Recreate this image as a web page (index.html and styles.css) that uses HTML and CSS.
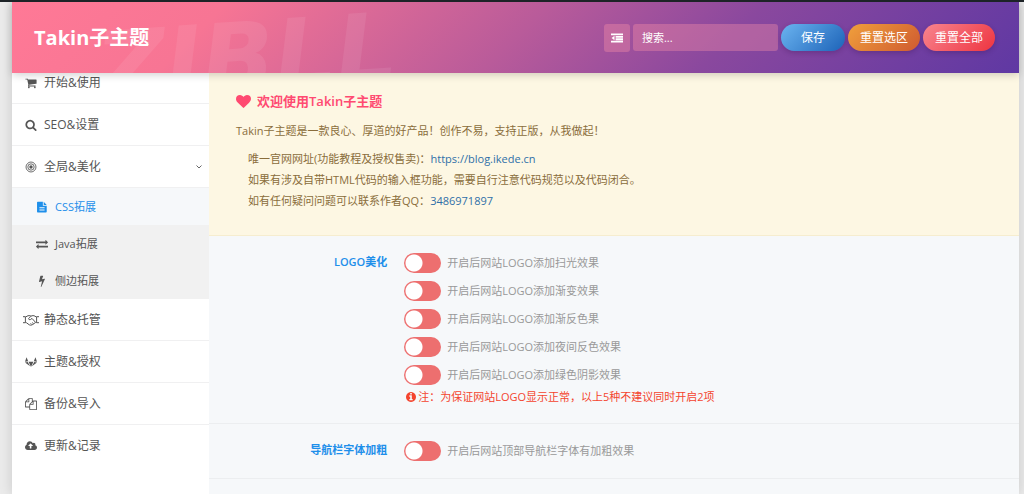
FILE: index.html
```html
<!DOCTYPE html>
<html lang="zh-CN">
<head>
<meta charset="utf-8">
<title>Takin子主题</title>
<link rel="stylesheet" href="styles.css">
</head>
<body>
<div class="panel">
  <header class="header">
    <div class="watermark" aria-hidden="true"><span class="watermark-text">ZIBLL</span></div>
    <h1 class="brand">Takin子主题</h1>
    <form class="actions">
      <button type="button" class="expand" aria-label="展开全部">
        <svg class="icon" viewBox="0 0 13 10"><path d="M0 0h13v2H0zM5 2.700h8v2H5zM5 5.400h8v2H5zM0 8.100h13v1.900H0zM3.800 2.600v4.800L.6 5z"/></svg>
      </button>
      <input class="search" type="text" placeholder="搜索..." aria-label="搜索">
      <button type="button" class="btn btn-save">保存</button>
      <button type="button" class="btn btn-section">重置选区</button>
      <button type="button" class="btn btn-all">重置全部</button>
    </form>
  </header>
  <div class="body">
    <nav class="nav">
      <ul class="menu">
        <li><a class="item" href="#start"><svg class="icon" viewBox="0 0 1792 1792"><path d="M704 1536q0 52-38 90t-90 38-90-38-38-90 38-90 90-38 90 38 38 90zm896 0q0 52-38 90t-90 38-90-38-38-90 38-90 90-38 90 38 38 90zm128-1088v512q0 24-16.500 42.500t-40.500 21.500l-1044 122q13 60 13 70 0 16-24 64h920q26 0 45 19t19 45-19 45-45 19h-1024q-26 0-45-19t-19-45q0-11 8-31.500t16-36 21.500-40 15.500-29.500l-177-823h-204q-26 0-45-19t-19-45 19-45 45-19h256q16 0 28.500 6.500t19.500 15.500 13 24.500 8 26 5.500 29.500 4.500 26h1201q26 0 45 19t19 45z"/></svg>开始&amp;使用</a></li>
        <li><a class="item" href="#seo"><svg class="icon" viewBox="0 0 1792 1792"><path d="M1216 832q0-185-131.500-316.500t-316.500-131.500-316.500 131.500-131.500 316.500 131.500 316.500 316.500 131.500 316.500-131.500 131.500-316.500zm512 832q0 52-38 90t-90 38q-54 0-90-38l-343-342q-179 124-399 124-143 0-273.500-55.500t-225-150-150-225-55.500-273.500 55.500-273.500 150-225 225-150 273.500-55.500 273.500 55.500 225 150 150 225 55.500 273.500q0 220-124 399l343 343q37 37 37 90z"/></svg>SEO&amp;设置</a></li>
        <li>
          <a class="item" href="#global"><svg class="icon line" viewBox="0 0 14 14"><circle cx="7" cy="7" r="5.800"/><circle cx="7" cy="7" r="3.700"/><circle class="solid" cx="7" cy="7" r="2"/></svg>全局&amp;美化<svg class="chevron" viewBox="0 0 8 6"><path d="M1.500 1.500 4 4l2.500-2.500"/></svg></a>
          <ul class="submenu">
            <li><a class="item sub active" href="#css"><svg class="icon" viewBox="0 0 12 14"><path fill-rule="evenodd" d="M1 1h6v4.500h4.500V12.500q0 .9-.9.900H1q-.8 0-.8-.9V1.800Q.2 1 1 1zM3 7v.8h6V7zm0 2v.8h6V9zm0 2v.8h6V11zM8 1l3.500 3.600H8z"/></svg>CSS拓展</a></li>
            <li><a class="item sub" href="#java"><svg class="icon" viewBox="0 0 1792 1792"><path d="M1792 1184v192q0 13-9.500 22.500t-22.500 9.500h-1376v192q0 13-9.500 22.500t-22.500 9.500q-12 0-24-10l-319-320q-9-9-9-22 0-14 9-23l320-320q9-9 23-9 13 0 22.500 9.500t9.500 22.500v192h1376q13 0 22.500 9.500t9.500 22.500zm0-544q0 14-9 23l-320 320q-9 9-23 9-13 0-22.500-9.500t-9.500-22.500v-192h-1376q-13 0-22.500-9.500t-9.500-22.500v-192q0-13 9.500-22.500t22.500-9.500h1376v-192q0-14 9-23t23-9q12 0 24 10l319 319q9 9 9 23z"/></svg>Java拓展</a></li>
            <li><a class="item sub" href="#side"><svg class="icon" viewBox="0 0 1792 1792"><path d="M1333 566q18 20 7 44l-540 1157q-13 25-42 25-4 0-14-2-17-5-25.500-19t-4.500-30l197-808-406 101q-4 1-12 1-18 0-31-11-18-15-13-39l201-825q4-14 16-23t28-9h328q19 0 32 12.500t13 29.500q0 8-5 18l-171 463 396-98q8-2 12-2 19 0 34 15z"/></svg>侧边拓展</a></li>
          </ul>
        </li>
        <li><a class="item" href="#static"><svg class="icon line wide" viewBox="0 0 16 12"><path d="M0 2.700h2.400v6H0M16 2.700h-2.400v6H16M2.600 3 5 1.700h2.200L8 2.200l1-.5h2L13.400 3M2.600 8.600l1 .2 2.600 2q1.600.8 3 0l3.200-2.200 1-.1M8 2.200 5.600 4.600q.2 1.600 1.800 1L9 4.400l3.400 3.800M9.200 8.500l1.300 1.300M7.600 9.300l1 1.100"/></svg>静态&amp;托管</a></li>
        <li><a class="item" href="#theme"><svg class="icon" viewBox="0 0 14 14"><path d="M1.800 1.600 3.700 6.200 0 6.800zM0 7.500 3.200 6.900 6 12zM12.200 1.600 10.300 6.200 14 6.800zM14 7.500 10.800 6.900 8 12zM4.200 6.700h5.600L7 12.800z"/></svg>主题&amp;授权</a></li>
        <li><a class="item" href="#backup"><svg class="icon" viewBox="0 0 1792 1792"><path d="M1696 384q40 0 68 28t28 68v1216q0 40-28 68t-68 28h-960q-40 0-68-28t-28-68v-288h-544q-40 0-68-28t-28-68v-672q0-40 20-88t48-76l408-408q28-28 76-48t88-20h416q40 0 68 28t28 68v328q68-40 128-40h416zm-544 213l-299 299h299v-299zm-640-384l-299 299h299v-299zm196 647l316-316v-416h-384v416q0 40-28 68t-68 28h-416v640h512v-256q0-40 20-88t48-76zm956 804v-1152h-384v416q0 40-28 68t-68 28h-416v640h896z"/></svg>备份&amp;导入</a></li>
        <li><a class="item last" href="#update"><svg class="icon" viewBox="0 0 1920 1792"><path d="M1280 864q0-14-9-23l-352-352q-9-9-23-9t-23 9l-351 351q-10 12-10 24 0 14 9 23t23 9h224v352q0 13 9.500 22.500t22.500 9.500h192q13 0 22.500-9.500t9.500-22.500v-352h224q13 0 22.500-9.500t9.500-22.500zm640 288q0 159-112.500 271.500t-271.500 112.500h-1088q-185 0-316.500-131.500t-131.500-316.500q0-130 70-240t188-165q-2-30-2-43 0-212 150-362t362-150q156 0 285.500 87t188.500 231q71-62 166-62 106 0 181 75t75 181q0 76-41 138 130 31 213.500 135.500t83.500 238.500z"/></svg>更新&amp;记录</a></li>
      </ul>
    </nav>
    <main class="content">
      <section class="notice">
        <h2 class="notice-title"><svg class="icon" viewBox="0 0 1792 1792"><path d="M896 1664q-26 0-44-18l-624-602q-10-8-27.500-26t-55.500-65.500-68-97.500-53.500-121-23.500-138q0-220 127-344t351-124q62 0 126.500 21.500t120 58 95.500 68.500 76 68q36-36 76-68t95.500-68.500 120-58 126.500-21.500q224 0 351 124t127 344q0 221-229 450l-623 600q-18 18-44 18z"/></svg>欢迎使用Takin子主题</h2>
        <p class="lead">Takin子主题是一款良心、厚道的好产品！创作不易，支持正版，从我做起！</p>
        <ul class="notes">
          <li>唯一官网网址(功能教程及授权售卖)：<a href="#blog">https://blog.ikede.cn</a></li>
          <li>如果有涉及自带HTML代码的输入框功能，需要自行注意代码规范以及代码闭合。</li>
          <li>如有任何疑问问题可以联系作者QQ：<a href="#qq">3486971897</a></li>
        </ul>
      </section>
      <section class="field">
        <h3 class="field-title">LOGO美化</h3>
        <div class="switches">
          <label class="switch"><input type="checkbox">开启后网站LOGO添加扫光效果</label>
          <label class="switch"><input type="checkbox">开启后网站LOGO添加渐变效果</label>
          <label class="switch"><input type="checkbox">开启后网站LOGO添加渐反色果</label>
          <label class="switch"><input type="checkbox">开启后网站LOGO添加夜间反色效果</label>
          <label class="switch"><input type="checkbox">开启后网站LOGO添加绿色阴影效果</label>
          <p class="warning"><svg class="icon" viewBox="128 128 1536 1536"><path d="M1152 1376v-160q0-14-9-23t-23-9h-96v-512q0-14-9-23t-23-9h-320q-14 0-23 9t-9 23v160q0 14 9 23t23 9h96v320h-96q-14 0-23 9t-9 23v160q0 14 9 23t23 9h448q14 0 23-9t9-23zm-128-896v-160q0-14-9-23t-23-9h-192q-14 0-23 9t-9 23v160q0 14 9 23t23 9h192q14 0 23-9t9-23zm640 416q0 209-103 385.500t-279.500 279.500-385.500 103-385.500-103-279.500-279.500-103-385.500 103-385.500 279.500-279.500 385.500-103 385.500 103 279.500 279.500 103 385.500z"/></svg>注：为保证网站LOGO显示正常，以上5种不建议同时开启2项</p>
        </div>
      </section>
      <section class="field">
        <h3 class="field-title">导航栏字体加粗</h3>
        <div class="switches">
          <label class="switch"><input type="checkbox">开启后网站顶部导航栏字体有加粗效果</label>
        </div>
      </section>
    </main>
  </div>
</div>
</body>
</html>
```
FILE: styles.css
```css
* { box-sizing: border-box; }

body {
  margin: 0;
  padding: 0 5px 0 12px;
  min-height: 100vh;
  display: flex;
  flex-direction: column;
  border-top: 2px solid #1d2327;
  background: #ebebeb;
  color: #555;
  font: 11px/20px "Open Sans", "Noto Sans CJK SC", sans-serif;
  overflow: hidden;
}

h1, h2, h3, p, ul { margin: 0; padding: 0; }
ul { list-style: none; }
a { text-decoration: none; }
button, input { font: inherit; }

.icon {
  width: 12px;
  height: 12px;
  flex: none;
  fill: currentColor;
}

.line { fill: none; stroke: currentColor; stroke-width: 1; }
.line .solid { fill: currentColor; stroke: none; }

.panel {
  flex: 1;
  display: flex;
  flex-direction: column;
  box-shadow: 0 0 12px rgba(0, 0, 0, .15);
}

/* Header */
.header {
  position: relative;
  z-index: 2;
  height: 71px;
  padding: 0 24px 0 22px;
  display: flex;
  align-items: center;
  justify-content: space-between;
  background: linear-gradient(135deg, #ff7996 0%, #f77594 20%, #b95b9a 50%, #8a489e 70%, #5f38a3 100%);
  box-shadow: 0 2px 8px rgba(0, 0, 0, .18);
}

/* Large brand lettering that runs off the lower edge of the bar */
.watermark {
  position: absolute;
  inset: 0;
  overflow: hidden;
  padding-left: 84px;
  pointer-events: none;
}

.watermark-text {
  display: inline-block;
  color: rgba(255, 255, 255, .08);
  font-family: "DejaVu Sans", sans-serif;
  font-size: 96px;
  font-weight: 700;
  font-style: italic;
  line-height: 112px;
  transform: rotate(-4deg);
}

.brand {
  position: relative;
  color: #fff;
  font-size: 20px;
  line-height: 28px;
  font-weight: 700;
}

.actions {
  position: relative;
  display: flex;
  align-items: center;
  gap: 3px;
}

.expand {
  width: 26px;
  height: 28px;
  padding: 0;
  display: grid;
  place-items: center;
  border: 0;
  border-radius: 3px;
  background: rgba(255, 150, 170, .35);
  color: #fff;
}

.search {
  width: 145px;
  height: 27px;
  padding: 0 9px;
  border: 0;
  border-radius: 3px;
  background: rgba(255, 150, 170, .35);
  color: #fff;
}

.search::placeholder { color: #fff; opacity: 1; }

.btn {
  height: 27px;
  padding: 0 12px;
  border: 0;
  border-radius: 14px;
  color: #fff;
  font-size: 12px;
  box-shadow: 0 2px 5px rgba(60, 20, 80, .3);
}

.btn-save { padding: 0 20px; background: linear-gradient(135deg, #6bb4f0, #1d63b8); }
.btn-section { background: linear-gradient(135deg, #f0a03c, #cf5a30); }
.btn-all { background: linear-gradient(135deg, #f8858f, #ee3440); }

/* Sidebar */
.body { flex: 1; display: flex; }

.nav {
  width: 197px;
  flex: none;
  background: #fff;
}

.menu { margin-top: -11px; }

.item {
  height: 42px;
  padding: 0 6px 0 13px;
  display: flex;
  align-items: center;
  gap: 7px;
  border-bottom: 1px solid #f0f0f1;
  color: #555;
  font-size: 12px;
}

.last { border-bottom: 0; }
.wide { width: 16px; margin: 0 -2px; }

.chevron {
  width: 8px;
  height: 6px;
  margin-left: auto;
  fill: none;
  stroke: #666;
}

.sub {
  height: 37px;
  padding-left: 24px;
  border-bottom: 0;
  background: #f1f1f1;
  font-size: 11px;
}

.active { background: #f6f8fa; color: #1e8fea; }

/* Content */
.content {
  flex: 1;
  background: #f6f8fa;
}

.notice {
  padding: 18px 27px 24px;
  border-bottom: 1px solid #f6edcf;
  background: #fdf7e3;
  color: #8a6d3b;
}

.notice-title {
  display: flex;
  align-items: center;
  gap: 6px;
  color: #ff4a71;
  font-size: 13px;
  font-weight: 600;
}

.notice-title .icon { width: 15px; height: 15px; }
.lead { margin: 10px 0 7px; }
.notes { padding-left: 12px; line-height: 21px; }
.notes a { color: #2f6fa8; }

.field {
  padding: 16px 0;
  display: grid;
  grid-template-columns: 22% 1fr;
  gap: 17px;
  border-bottom: 1px solid #eceef0;
}

.field-title {
  color: #1e8fea;
  font-size: 11px;
  font-weight: 600;
  text-align: right;
}

.switches { display: grid; gap: 6px; }

.switch {
  height: 22px;
  display: flex;
  align-items: center;
  gap: 6px;
  color: #999;
}

.switch input {
  appearance: none;
  width: 37px;
  height: 20px;
  margin: 0;
  border-radius: 10px;
  background: radial-gradient(circle at 10px 10px, #fff 8px, transparent 9px), #ed6f6f;
}

.switch input:checked {
  background: radial-gradient(circle at 27px 10px, #fff 8px, transparent 9px), #4fb87a;
}

.warning {
  margin-top: -5px;
  padding-left: 2px;
  display: flex;
  align-items: center;
  gap: 2px;
  color: #f4442e;
}

.warning .icon { width: 10px; height: 10px; }
```
